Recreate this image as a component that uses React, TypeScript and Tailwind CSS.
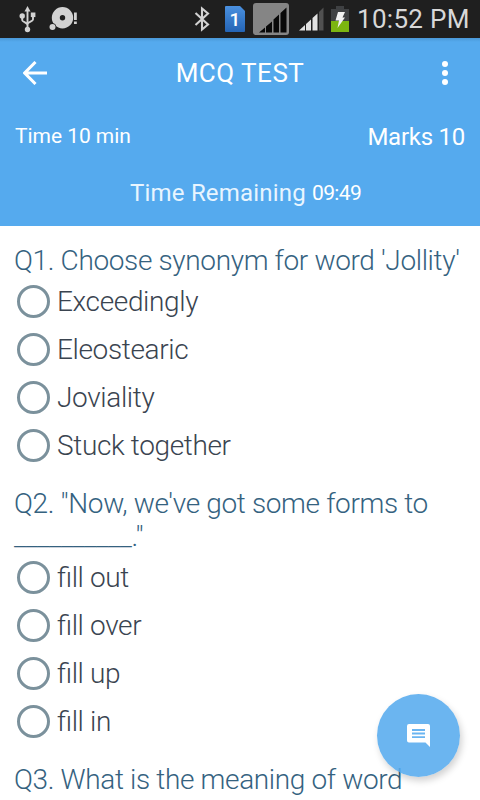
import { useState } from "react";

interface Question {
  id: number;
  text: string;
  options: string[];
}

const questions: Question[] = [
  {
    id: 1,
    text: "Q1. Choose synonym for word 'Jollity'",
    options: ["Exceedingly", "Eleostearic", "Joviality", "Stuck together"],
  },
  {
    id: 2,
    text: 'Q2. "Now, we\'ve got some forms to __________."',
    options: ["fill out", "fill over", "fill up", "fill in"],
  },
  {
    id: 3,
    text: "Q3. What is the meaning of word",
    options: [],
  },
];

const UsbIcon = () => (
  <svg width="18" height="28" viewBox="0 0 18 28" fill="none" stroke="#d2d2d2" strokeWidth="1.9">
    <path d="M8.5 5v20M3.2 11v4.2c0 1.6 5.3 2.6 5.3 4.8M14 10.5v4c0 2-5.500 2.500-5.500 5" />
    <path d="M8.500 1l3 5.500h-6z" fill="#d2d2d2" stroke="none" />
    <circle cx="3.2" cy="11" r="2.700" fill="#d2d2d2" stroke="none" />
    <path d="M11.800 7.500h4.600v4.600h-4.600z" fill="#d2d2d2" stroke="none" />
    <circle cx="8.500" cy="24.500" r="2.700" fill="#d2d2d2" stroke="none" />
  </svg>
);

const DiscIcon = () => (
  <svg width="29" height="28" viewBox="0 0 29 28" fill="#d2d2d2">
    <path
      fillRule="evenodd"
      d="M13.500 2a10.700 10.700 0 1 1 0 21.400 10.700 10.700 0 0 1 0-21.400zm0 8a2.700 2.700 0 1 0 0 5.400 2.700 2.700 0 0 0 0-5.400z"
    />
    <circle cx="3.500" cy="22" r="3.700" fill="#1f1f1f" />
    <circle cx="3.500" cy="22" r="3" />
    <path d="M25 7.500h2.800v7.500H25zM25 16.500h2.800v2.500H25z" />
  </svg>
);

const BluetoothIcon = () => (
  <svg width="16" height="26" viewBox="0 0 16 26" fill="none" stroke="#d2d2d2" strokeWidth="2.100">
    <path d="M1.500 7l12.500 11.500-6 5V2.500l6 5L1.500 19" />
  </svg>
);

const SimIcon = () => (
  <svg width="20" height="26" viewBox="0 0 20 26">
    <defs>
      <linearGradient id="sim" x1="0" y1="0" x2="0" y2="1">
        <stop offset="0" stopColor="#4a90df" />
        <stop offset="1" stopColor="#2464b4" />
      </linearGradient>
    </defs>
    <path d="M0 1q0-1 1-1h14l5 5v20q0 1-1 1H1q-1 0-1-1z" fill="url(#sim)" />
    <text x="10" y="19.500" textAnchor="middle" fill="#fff" fontFamily="Roboto, sans-serif" fontSize="19" fontWeight="500">
      1
    </text>
  </svg>
);

const NoSignalIcon = () => (
  <svg width="36" height="32" viewBox="0 0 36 32">
    <rect width="36" height="32" rx="3" fill="#858585" />
    <path d="M6 29.500l6-5v5zM13 23.500l6-5v11h-6zM20.500 16.500l5.500-5v18h-5.500zM27.500 10l6-5.500v25h-6z" fill="#080808" />
  </svg>
);

const SignalIcon = () => (
  <svg width="25" height="24" viewBox="0 0 25 24" fill="#e2e2e2">
    <path d="M0 23.500l6-5.500v5.500zM7 17l5-4.500v11H7zM13.500 11l5-4.500v17h-5z" />
    <path d="M20 5l4.500-4.500v23H20z" fill="#515151" />
  </svg>
);

const BatteryIcon = () => (
  <svg width="18" height="26" viewBox="0 0 18 26">
    <path d="M5 0h8v3h5v12H0V3h5z" fill="#3f4143" />
    <path d="M0 15h18v11H0z" fill="#7cb510" />
    <path d="M7 6h7l-2.500 5.500H14L6.500 22l1.500-7.500H4.500z" fill="#f1f1f1" />
  </svg>
);

const StatusBar = () => (
  <div className="flex h-[38px] shrink-0 items-center bg-[#1f1f1f] text-[#d8d8d8]">
    <div className="flex w-[194px] items-center gap-3 pl-[19px]">
      <UsbIcon />
      <DiscIcon />
    </div>
    <div className="flex items-center">
      <BluetoothIcon />
      <div className="ml-[15px]">
        <SimIcon />
      </div>
      <div className="ml-2">
        <NoSignalIcon />
      </div>
      <div className="ml-[10px]">
        <SignalIcon />
      </div>
      <div className="ml-[7px]">
        <BatteryIcon />
      </div>
    </div>
    <span className="ml-[8px] text-[26px] leading-[38px] tracking-[0.3px] whitespace-nowrap">10:52 PM</span>
  </div>
);

const Header = () => (
  <header className="h-[188px] shrink-0 bg-[#55aaee] text-white">
    <div className="h-1 bg-linear-to-b from-[#4a98d8] to-[#55aaee]" />
    <div className="flex h-[62px] items-center justify-between pr-8 pl-[23px]">
      <button type="button" aria-label="Back">
        <svg width="25" height="24" viewBox="0 0 25 24" fill="none" stroke="#fff" strokeWidth="3">
          <path d="M24 12H2.500M12.500 1L1.700 12l10.800 11" />
        </svg>
      </button>
      <h1 className="mr-[10px] text-[26px] leading-8 tracking-[0.5px]">MCQ TEST</h1>
      <button type="button" aria-label="More">
        <svg width="6" height="26" viewBox="0 0 6 26" fill="#fff">
          <circle cx="3" cy="4" r="3" />
          <circle cx="3" cy="13" r="3" />
          <circle cx="3" cy="22" r="3" />
        </svg>
      </button>
    </div>
    <div className="flex h-[64px] items-center justify-between px-[15px]">
      <span className="pt-[2px] text-[21px] tracking-[-0.05px]">Time 10 min</span>
      <span className="pt-[2px] text-[24px] tracking-[-0.25px]">Marks 10</span>
    </div>
    <div className="flex h-[48px] items-center pl-[130px] text-[#e8f5ff]">
      <span className="pt-[2px] text-[24px] tracking-[0.2px]">Time Remaining</span>
      <span className="ml-[6px] pt-[3px] text-[21px] tracking-[-0.6px] text-white">09:49</span>
    </div>
  </header>
);

const App: React.FC = () => {
  const [answers, setAnswers] = useState<Record<number, string>>({});

  return (
    <div className="relative flex h-[800px] w-[480px] flex-col overflow-hidden bg-white font-[Roboto,sans-serif]">
      <StatusBar />
      <Header />

      <main className="flex-1 overflow-hidden pt-[18px] pl-[14px] font-light tracking-[-0.36px] [font-feature-settings:'liga']">
        {questions.map((q) => (
          <section key={q.id} className="mb-[18px]">
            <h2 className="w-[460px] text-[28px] leading-[33px] text-[#35627f]">{q.text}</h2>
            {q.options.map((option) => (
              <button
                key={option}
                type="button"
                onClick={() => setAnswers({ ...answers, [q.id]: option })}
                className="flex h-12 w-full items-center gap-[7px] pl-[3px] text-left text-[28px] text-[#3a4450]"
              >
                <span className="flex size-[33px] items-center justify-center rounded-full border-[3px] border-[#7b919c]">
                  {answers[q.id] === option && <span className="size-4 rounded-full bg-[#55aaee]" />}
                </span>
                <span className="pt-[2px]">{option}</span>
              </button>
            ))}
          </section>
        ))}
      </main>

      <button
        type="button"
        aria-label="Comments"
        className="absolute top-[694px] left-[377px] flex size-[83px] items-center justify-center rounded-full bg-[#55aaee]/87 shadow-[2px_4px_7px_rgba(0,0,0,0.18)]"
      >
        <svg width="23" height="23" viewBox="0 0 23 23">
          <path d="M2 0h19q2 0 2 2v21l-4.500-4.500H2q-2 0-2-2V2q0-2 2-2z" fill="#fff" />
          <path d="M5 5h13v1.900H5zM5 8.600h13v1.900H5zM5 12.200h13v1.900H5z" fill="#6bb5f1" />
        </svg>
      </button>
    </div>
  );
};

export default App;
